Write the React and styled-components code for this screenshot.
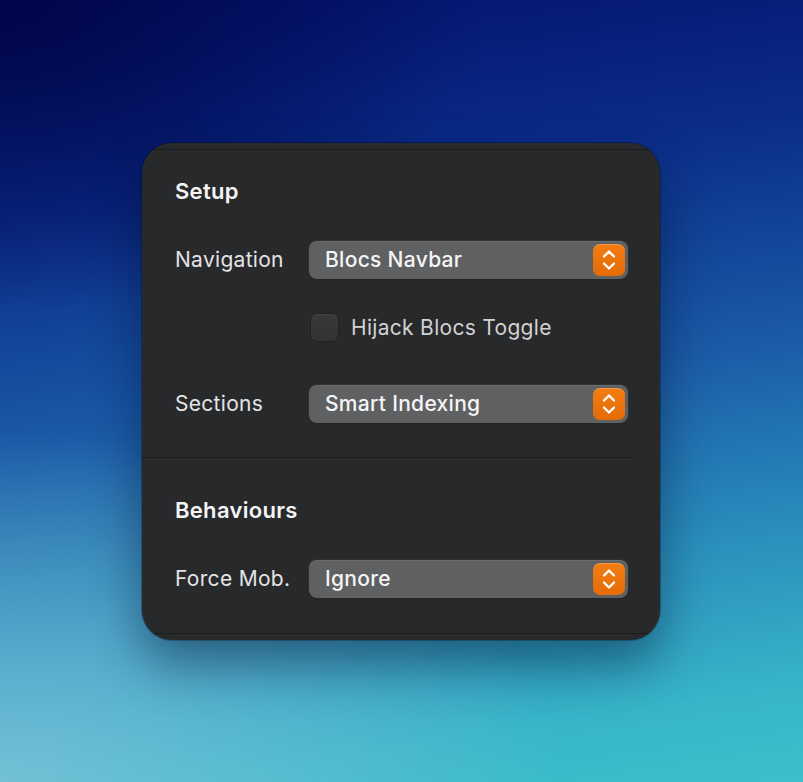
import React, { useState } from 'react'
import styled, { createGlobalStyle } from 'styled-components'

const GlobalStyle = createGlobalStyle`
    html, body {
        margin: 0;
        padding: 0;
    }
    body {
        font-family: Inter, "Noto Sans", "Liberation Sans", sans-serif;
        -webkit-font-smoothing: antialiased;
    }
`

const Backdrop = styled.div`
    width: 100vw;
    height: 100vh;
    display: flex;
    align-items: center;
    justify-content: center;
    padding-right: 1px;
    box-sizing: border-box;
    background:
        radial-gradient(ellipse 70% 45% at 0% 100%, rgba(140, 200, 220, 0.7) 0%, rgba(140, 200, 220, 0) 100%),
        radial-gradient(ellipse 60% 40% at 0% 0%, rgba(0, 4, 70, 0.9) 0%, rgba(0, 4, 70, 0) 100%),
        linear-gradient(172deg, #03106a 0%, #0a2c88 25%, #1a5aa6 50%, #2a8fbd 72%, #38b6c8 90%, #3cc0ca 100%);
    overflow: hidden;
`

const Panel = styled.div`
    width: 518px;
    height: 497px;
    box-sizing: border-box;
    background: #28292b;
    border-radius: 30px;
    padding: 6px 0 6px;
    box-shadow: 0 24px 50px rgba(0, 10, 40, 0.45), 0 0 0 1px rgba(0, 0, 0, 0.25);
    display: flex;
    flex-direction: column;
    overflow: hidden;
`

const Scroll = styled.div`
    flex: 1;
    border-top: 1px solid #1b1b1d;
    border-bottom: 1px solid #1b1b1d;
    display: flex;
    flex-direction: column;
`

const Section = styled.section`
    padding: ${p => p.$top}px 0 ${p => p.$bottom}px 33px;
    display: flex;
    flex-direction: column;
`

const Heading = styled.h2`
    margin: 0;
    height: 26px;
    line-height: 26px;
    font-size: 22px;
    font-weight: 600;
    color: #f4f4f5;
    letter-spacing: 0.3px;
`

const Row = styled.div`
    display: grid;
    grid-template-columns: 134px 319px;
    align-items: center;
    margin-top: ${p => p.$gap}px;
`

const Label = styled.span`
    font-size: 21px;
    color: #e4e4e6;
    letter-spacing: 0.3px;
`

const SelectBox = styled.div`
    height: 38px;
    box-sizing: border-box;
    border-radius: 8px;
    background: #5f6062;
    box-shadow: inset 0 1px 0 rgba(255, 255, 255, 0.08), 0 0 0 1px rgba(255, 255, 255, 0.04), 0 1px 1px rgba(0, 0, 0, 0.3);
    display: flex;
    align-items: center;
    justify-content: space-between;
    padding: 0 3px 0 16px;
    cursor: default;
`

const SelectText = styled.span`
    font-size: 21px;
    font-weight: 500;
    color: #f5f5f6;
    letter-spacing: 0.3px;
`

const Stepper = styled.div`
    width: 32px;
    height: 32px;
    border-radius: 7px;
    background: linear-gradient(#f27c12, #e56c08);
    box-shadow: inset 0 1px 0 rgba(255, 255, 255, 0.2);
    display: flex;
    align-items: center;
    justify-content: center;
`

const CheckRow = styled.label`
    grid-column: 2;
    display: flex;
    align-items: center;
    gap: 13px;
    padding-left: 2px;
    cursor: default;
`

const Box = styled.span`
    width: 27px;
    height: 27px;
    border-radius: 6px;
    background: linear-gradient(#39393b, #333335);
    box-shadow: inset 0 1px 0 rgba(255, 255, 255, 0.06), 0 0 0 0.5px rgba(0, 0, 0, 0.4);
`

const CheckText = styled.span`
    font-size: 21px;
    color: #d2d2d4;
    letter-spacing: 0.3px;
`

const Divider = styled.hr`
    margin: 0 28px 0 0;
    border: none;
    height: 1px;
    background: #1b1b1d;
`

const Chevrons = () => (
    <svg width="18" height="24" viewBox="0 0 18 24" fill="none">
        <path d="M4 8.5 L9 3.5 L14 8.5" stroke="#fff" strokeWidth="2.3" strokeLinecap="round" strokeLinejoin="round" />
        <path d="M4 15.5 L9 20.5 L14 15.5" stroke="#fff" strokeWidth="2.3" strokeLinecap="round" strokeLinejoin="round" />
    </svg>
)

const PopUp = ({ value }) => (
    <SelectBox>
        <SelectText>{value}</SelectText>
        <Stepper><Chevrons /></Stepper>
    </SelectBox>
)

const App = () => {
    const [settings] = useState({
        navigation: 'Blocs Navbar',
        sections: 'Smart Indexing',
        forceMob: 'Ignore'
    })

    return (
        <Backdrop>
            <GlobalStyle />
            <Panel>
                <Scroll>
                    <Section $top={28} $bottom={34}>
                        <Heading>Setup</Heading>
                        <Row $gap={37}>
                            <Label>Navigation</Label>
                            <PopUp value={settings.navigation} />
                        </Row>
                        <Row $gap={35}>
                            <CheckRow>
                                <Box />
                                <CheckText>Hijack Blocs Toggle</CheckText>
                            </CheckRow>
                        </Row>
                        <Row $gap={44}>
                            <Label>Sections</Label>
                            <PopUp value={settings.sections} />
                        </Row>
                    </Section>
                    <Divider />
                    <Section $top={39} $bottom={0}>
                        <Heading>Behaviours</Heading>
                        <Row $gap={37}>
                            <Label>Force Mob.</Label>
                            <PopUp value={settings.forceMob} />
                        </Row>
                    </Section>
                </Scroll>
            </Panel>
        </Backdrop>
    )
}

export default App
